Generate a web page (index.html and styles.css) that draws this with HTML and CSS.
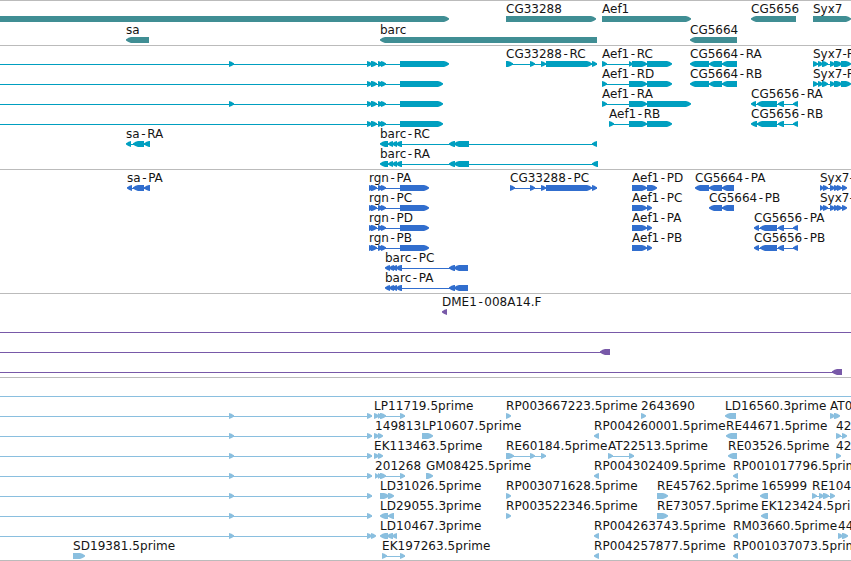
FILE: index.html
```html
<!DOCTYPE html>
<html lang="en">

<head>
    <meta charset="UTF-8">
    <meta name="viewport" content="width=device-width, initial-scale=1.0">
    <title>Genome tracks</title>
    <link rel="stylesheet" href="styles.css">
</head>

<body>
    <div class="browser">
        <div class="track track--gene"></div>
        <div class="track track--transcript"></div>
        <div class="track track--protein"></div>
        <div class="track track--clone"></div>
        <div class="track track--est"></div>
    </div>
    <script src="tracks.js"></script>
</body>

</html>
```

FILE: styles.css
```css
*,
*::after,
*::before {
    padding: 0;
    margin: 0;
    box-sizing: border-box;
}

body {
    background: #fff;
    overflow: hidden;
}

.browser {
    width: 851px;
    height: 561px;
    overflow: hidden;
    border-bottom: 1px solid #bbb;
}

.track {
    display: flex;
    flex-direction: column;
    padding: 1px 0 2px;
    border-top: 1px solid #bbb;
}

.track__row {
    display: block;
    flex: none;
    width: 851px;
    height: 20px;
}

.track__label {
    font: 12px "DejaVu Sans", sans-serif;
    fill: #141414;
}

.track--gene {
    padding-bottom: 1px;
    color: #408e94;
}

.track--gene .track__row {
    height: 21px;
}

.track--transcript {
    color: #009fc0;
}

.track--protein {
    color: #316ece;
}

.track--clone {
    color: #7859a8;
}

.track--est {
    padding-bottom: 1px;
    color: #8abfdf;
}

.track--est .track__label {
    letter-spacing: 0.06px;
}
```

FILE: tracks.js
```js
// feature: [label, label x, direction, exons, line start, line end]
const R = 1;
const L = -1;

const rgnExons = [[367, 372], [371, 377], [378, 383], [381, 386]];
const rgnProtein = [[369, 374], [371, 377], [378, 383], [381, 386], [400, 429]];
const barcExons = [[380, 388], [388, 393], [392, 397], [396, 402], [449, 455], [454, 469]];
const barcProtein = [[385, 390], [389, 394], [392, 397], [396, 402], [449, 455], [454, 468]];
const syxExons = [[813, 818], [818, 823], [822, 828], [830, 835], [834, 842], [841, 851]];
const syxProtein = [[820, 824], [823, 828], [830, 835], [834, 839], [837, 842], [842, 847]];
const estLine = ['', 0, R, [[229, 234], [367, 372]], 0, 372];

const tracks = {
    gene: [
        [
            ['', 0, R, [[-9, 449]]],
            ['CG33288', 506, R, [[506, 596]]],
            ['Aef1', 602, R, [[602, 691]]],
            ['CG5656', 751, L, [[751, 796]]],
            ['Syx7', 813, R, [[813, 851]]]
        ],
        [
            ['sa', 126, L, [[126, 149]]],
            ['barc', 380, L, [[380, 597]]],
            ['CG5664', 690, L, [[690, 737]]]
        ]
    ],
    transcript: [
        [
            ['', 0, R, [[229, 234], ...rgnExons, [400, 449]], 0, 445],
            ['CG33288-RC', 506, R, [[506, 513], [530, 535], [541, 546], [546, 592], [592, 597]], 506, 597],
            ['Aef1-RC', 602, R, [[602, 607], [629, 633], [632, 647], [647, 672]], 602, 650],
            ['CG5664-RA', 690, L, [[690, 709], [709, 722], [722, 737]], 692, 730],
            ['Syx7-R', 813, R, syxExons, 813, 849]
        ],
        [
            ['', 0, R, [...rgnExons, [400, 443]], 0, 440],
            ['Aef1-RD', 602, R, [[602, 607], [629, 647], [647, 672]], 602, 650],
            ['CG5664-RB', 690, L, [[690, 709], [709, 722], [722, 737]], 692, 730],
            ['Syx7-R', 813, R, syxExons, 813, 849]
        ],
        [
            ['', 0, R, [[229, 234], ...rgnExons, [400, 443]], 0, 440],
            ['Aef1-RA', 602, R, [[602, 607], [629, 647], [647, 691]], 602, 650],
            ['CG5656-RA', 751, L, [[751, 756], [757, 777], [778, 784], [793, 798]], 752, 798]
        ],
        [
            ['', 0, R, [...rgnExons, [400, 443]], 0, 440],
            ['Aef1-RB', 609, R, [[609, 614], [629, 647], [647, 672]], 609, 650],
            ['CG5656-RB', 751, L, [[751, 757], [757, 777], [778, 784], [793, 798]], 752, 798]
        ],
        [
            ['sa-RA', 126, L, [[126, 131], [133, 144], [144, 150]], 127, 150],
            ['barc-RC', 380, L, [...barcExons, [592, 597]], 381, 597]
        ],
        [
            ['barc-RA', 380, L, [...barcExons, [592, 598]], 381, 597]
        ]
    ],
    protein: [
        [
            ['sa-PA', 127, L, [[127, 132], [133, 144], [144, 150]], 128, 150],
            ['rgn-PA', 369, R, rgnProtein, 369, 427],
            ['CG33288-PC', 510, R, [[510, 515], [530, 535], [541, 546], [546, 592], [592, 597]], 510, 597],
            ['Aef1-PD', 632, R, [[632, 647], [647, 657]], 632, 654],
            ['CG5664-PA', 695, L, [[695, 709], [709, 722], [722, 734]], 697, 730],
            ['Syx7-', 820, R, syxProtein, 820, 846]
        ],
        [
            ['rgn-PC', 369, R, rgnProtein, 369, 427],
            ['Aef1-PC', 632, R, [[632, 647], [647, 652]], 632, 650],
            ['CG5664-PB', 709, L, [[709, 722], [722, 734]], 711, 730],
            ['Syx7-', 820, R, syxProtein, 820, 846]
        ],
        [
            ['rgn-PD', 369, R, rgnProtein, 369, 427],
            ['Aef1-PA', 632, R, [[632, 647], [647, 652]], 632, 650],
            ['CG5656-PA', 754, L, [[754, 759], [760, 777], [778, 784], [793, 798]], 755, 798]
        ],
        [
            ['rgn-PB', 369, R, rgnProtein, 369, 427],
            ['Aef1-PB', 632, R, [[632, 647], [647, 652]], 632, 650],
            ['CG5656-PB', 754, L, [[754, 759], [760, 777], [778, 784], [793, 798]], 755, 798]
        ],
        [
            ['barc-PC', 385, L, barcProtein, 386, 468]
        ],
        [
            ['barc-PA', 385, L, barcProtein, 386, 468]
        ]
    ],
    clone: [
        [
            ['DME1-008A14.F', 442, L, [[442, 447]]]
        ],
        [
            ['', 0, L, [], 0, 851]
        ],
        [
            ['', 0, L, [[600, 610]], 0, 605]
        ],
        [
            ['', 0, L, [[832, 842]], 0, 838]
        ]
    ],
    est: [
        [
            ['', 0, R, [], 0, 851]
        ],
        [
            estLine,
            ['LP11719.5prime', 374, R, [[374, 379], [378, 382], [380, 386], [400, 405]], 374, 405],
            ['RP003667223.5prime', 506, R, [[506, 511]]],
            ['2643690', 641, R, [[641, 646]]],
            ['LD16560.3prime', 725, L, [[725, 736]]],
            ['AT0', 830, R, [[830, 835], [834, 840]]]
        ],
        [
            estLine,
            ['149813', 375, R, [[374, 379], [378, 383]]],
            ['LP10607.5prime', 422, R, [[422, 433]]],
            ['RP004260001.5prime', 594, L, [[594, 599]]],
            ['RE44671.5prime', 726, L, [[726, 737]]],
            ['42', 836, R, [[836, 841], [842, 847]], 836, 845]
        ],
        [
            estLine,
            ['EK113463.5prime', 374, R, [[374, 379], [378, 383]]],
            ['RE60184.5prime', 506, R, [[506, 514], [530, 535], [541, 546]], 506, 546],
            ['AT22513.5prime', 608, R, [[608, 613], [629, 634]], 608, 634],
            ['RE03526.5prime', 728, L, [[728, 737]]],
            ['42', 836, R, [[836, 841]]]
        ],
        [
            estLine,
            ['201268', 375, R, [[375, 379], [378, 382], [380, 386], [400, 405]], 375, 405],
            ['GM08425.5prime', 426, R, [[426, 433]]],
            ['RP004302409.5prime', 594, L, [[594, 599]]],
            ['RP001017796.5prim', 733, L, [[733, 738]]]
        ],
        [
            estLine,
            ['LD31026.5prime', 380, R, [[380, 389], [388, 394]], 380, 392],
            ['RP003071628.5prime', 506, R, [[506, 511]]],
            ['RE45762.5prime', 657, R, [[657, 668]]],
            ['165999', 761, L, [[760, 768]]],
            ['RE104', 812, R, [[812, 817], [819, 824], [823, 829], [830, 835]], 812, 834]
        ],
        [
            estLine,
            ['LD29055.3prime', 380, L, [[380, 388], [388, 394]], 382, 394],
            ['RP003522346.5prime', 506, R, [[506, 511]]],
            ['RE73057.5prime', 657, R, [[657, 668]]],
            ['EK123424.5pri', 761, L, [[761, 768]]]
        ],
        [
            ['', 0, R, [[229, 234], [367, 372], [371, 376]], 0, 375],
            ['LD10467.3prime', 380, L, [[380, 388], [387, 393], [392, 397]], 382, 397],
            ['RP004263743.5prime', 594, L, [[594, 599]]],
            ['RM03660.5prime', 733, L, [[733, 738]]],
            ['44', 838, R, [[838, 843], [842, 848]]]
        ],
        [
            ['SD19381.5prime', 73, R, [[73, 85]]],
            ['EK197263.5prime', 382, R, [[382, 387], [400, 405]], 382, 405],
            ['RP004257877.5prime', 594, L, [[594, 599]]],
            ['RP001037073.5prim', 733, L, [[733, 738]]]
        ]
    ]
};

// box six pixels high that ends in a rounded arrow head
function exon(start, end, dir) {
    const head = Math.min(5, end - start);
    const tail = dir === R ? start : end;
    const tip = dir === R ? end : start;
    const at = d => tip - dir * d;
    return `<path d="M${tail} 14H${at(head)}L${at(2.5)} 14.8L${at(1)} 15.8L${tip} 16.2V17.4L${at(1.5)} 18.4L${at(3)} 19.3L${at(head)} 20H${tail}Z"/>`;
}

// a little air on both sides of the hyphen
function labelText(label) {
    const [name, suffix] = label.split('-');
    if (!suffix || name === 'Syx7') {
        return label;
    }
    return `${name}<tspan dx="1.6">-</tspan><tspan dx="1.6">${suffix}</tspan>`;
}

function feature([label, x, dir, exons, from, to]) {
    let out = '';
    if (to) {
        out += `<rect x="${from}" y="17" width="${to - from}" height="1"/>`;
    }
    out += exons.map(([start, end]) => exon(start, end, dir)).join('');
    if (label) {
        out += `<text class="track__label" x="${x}" y="11">${labelText(label)}</text>`;
    }
    return out;
}

Object.keys(tracks).forEach(name => {
    document.querySelector('.track--' + name).innerHTML = tracks[name].map(
        row => `<svg class="track__row" fill="currentColor">${row.map(feature).join('')}</svg>`
    ).join('');
});
```
